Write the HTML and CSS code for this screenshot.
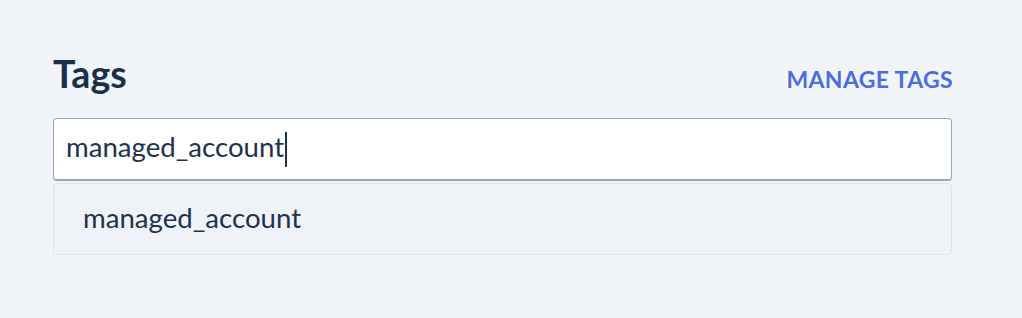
FILE: index.html
```html
<!DOCTYPE html>
<html lang="en">
<head>
<meta charset="utf-8">
<title>Tags</title>
<link rel="stylesheet" href="styles.css">
</head>
<body>
<main class="panel">
  <header class="panel-head">
    <h2 class="panel-title">Tags</h2>
    <a class="panel-link" href="#">MANAGE TAGS</a>
  </header>
  <div class="combo">
    <div class="combo-input">managed_account<span class="caret"></span></div>
    <ul class="combo-menu">
      <li class="combo-option">managed_account</li>
    </ul>
  </div>
</main>
</body>
</html>
```

FILE: styles.css
```css
html, body {
  margin: 0;
  padding: 0;
  background: #f1f4f9;
}
body {
  font-family: Lato, "Noto Sans", sans-serif;
  color: #1d324d;
}
.panel {
  padding: 52px 70px 0 53px;
}
.panel-head {
  display: flex;
  justify-content: space-between;
  align-items: baseline;
}
.panel-title {
  margin: 0;
  font-size: 37.5px;
  line-height: 44px;
  font-weight: 700;
  color: #1b2f4a;
}
.panel-link {
  margin-right: -1px;
  font-size: 23px;
  font-weight: 700;
  letter-spacing: 0.35px;
  color: #4a6ee0;
  text-decoration: none;
}
.combo {
  margin-top: 22px;
}
.combo-input {
  display: flex;
  align-items: center;
  background: #ffffff;
  border: 1px solid #97a7b7;
  border-bottom-width: 2px;
  border-radius: 4px;
  padding: 0 12px 4px;
  height: 56px;
  font-size: 27.6px;
  line-height: 56px;
  color: #1d324d;
}
.caret {
  display: inline-block;
  width: 2px;
  height: 35px;
  margin-left: 1px;
  margin-top: 4px;
  background: #1d324d;
}
.combo-menu {
  list-style: none;
  margin: 2px 0 0;
  padding: 0;
  border: 1px solid #dce3eb;
  border-radius: 4px;
  background: #eff3f8;
}
.combo-option {
  padding: 0 29px 3px;
  font-size: 27.6px;
  line-height: 67px;
  color: #1d324d;
}
```
